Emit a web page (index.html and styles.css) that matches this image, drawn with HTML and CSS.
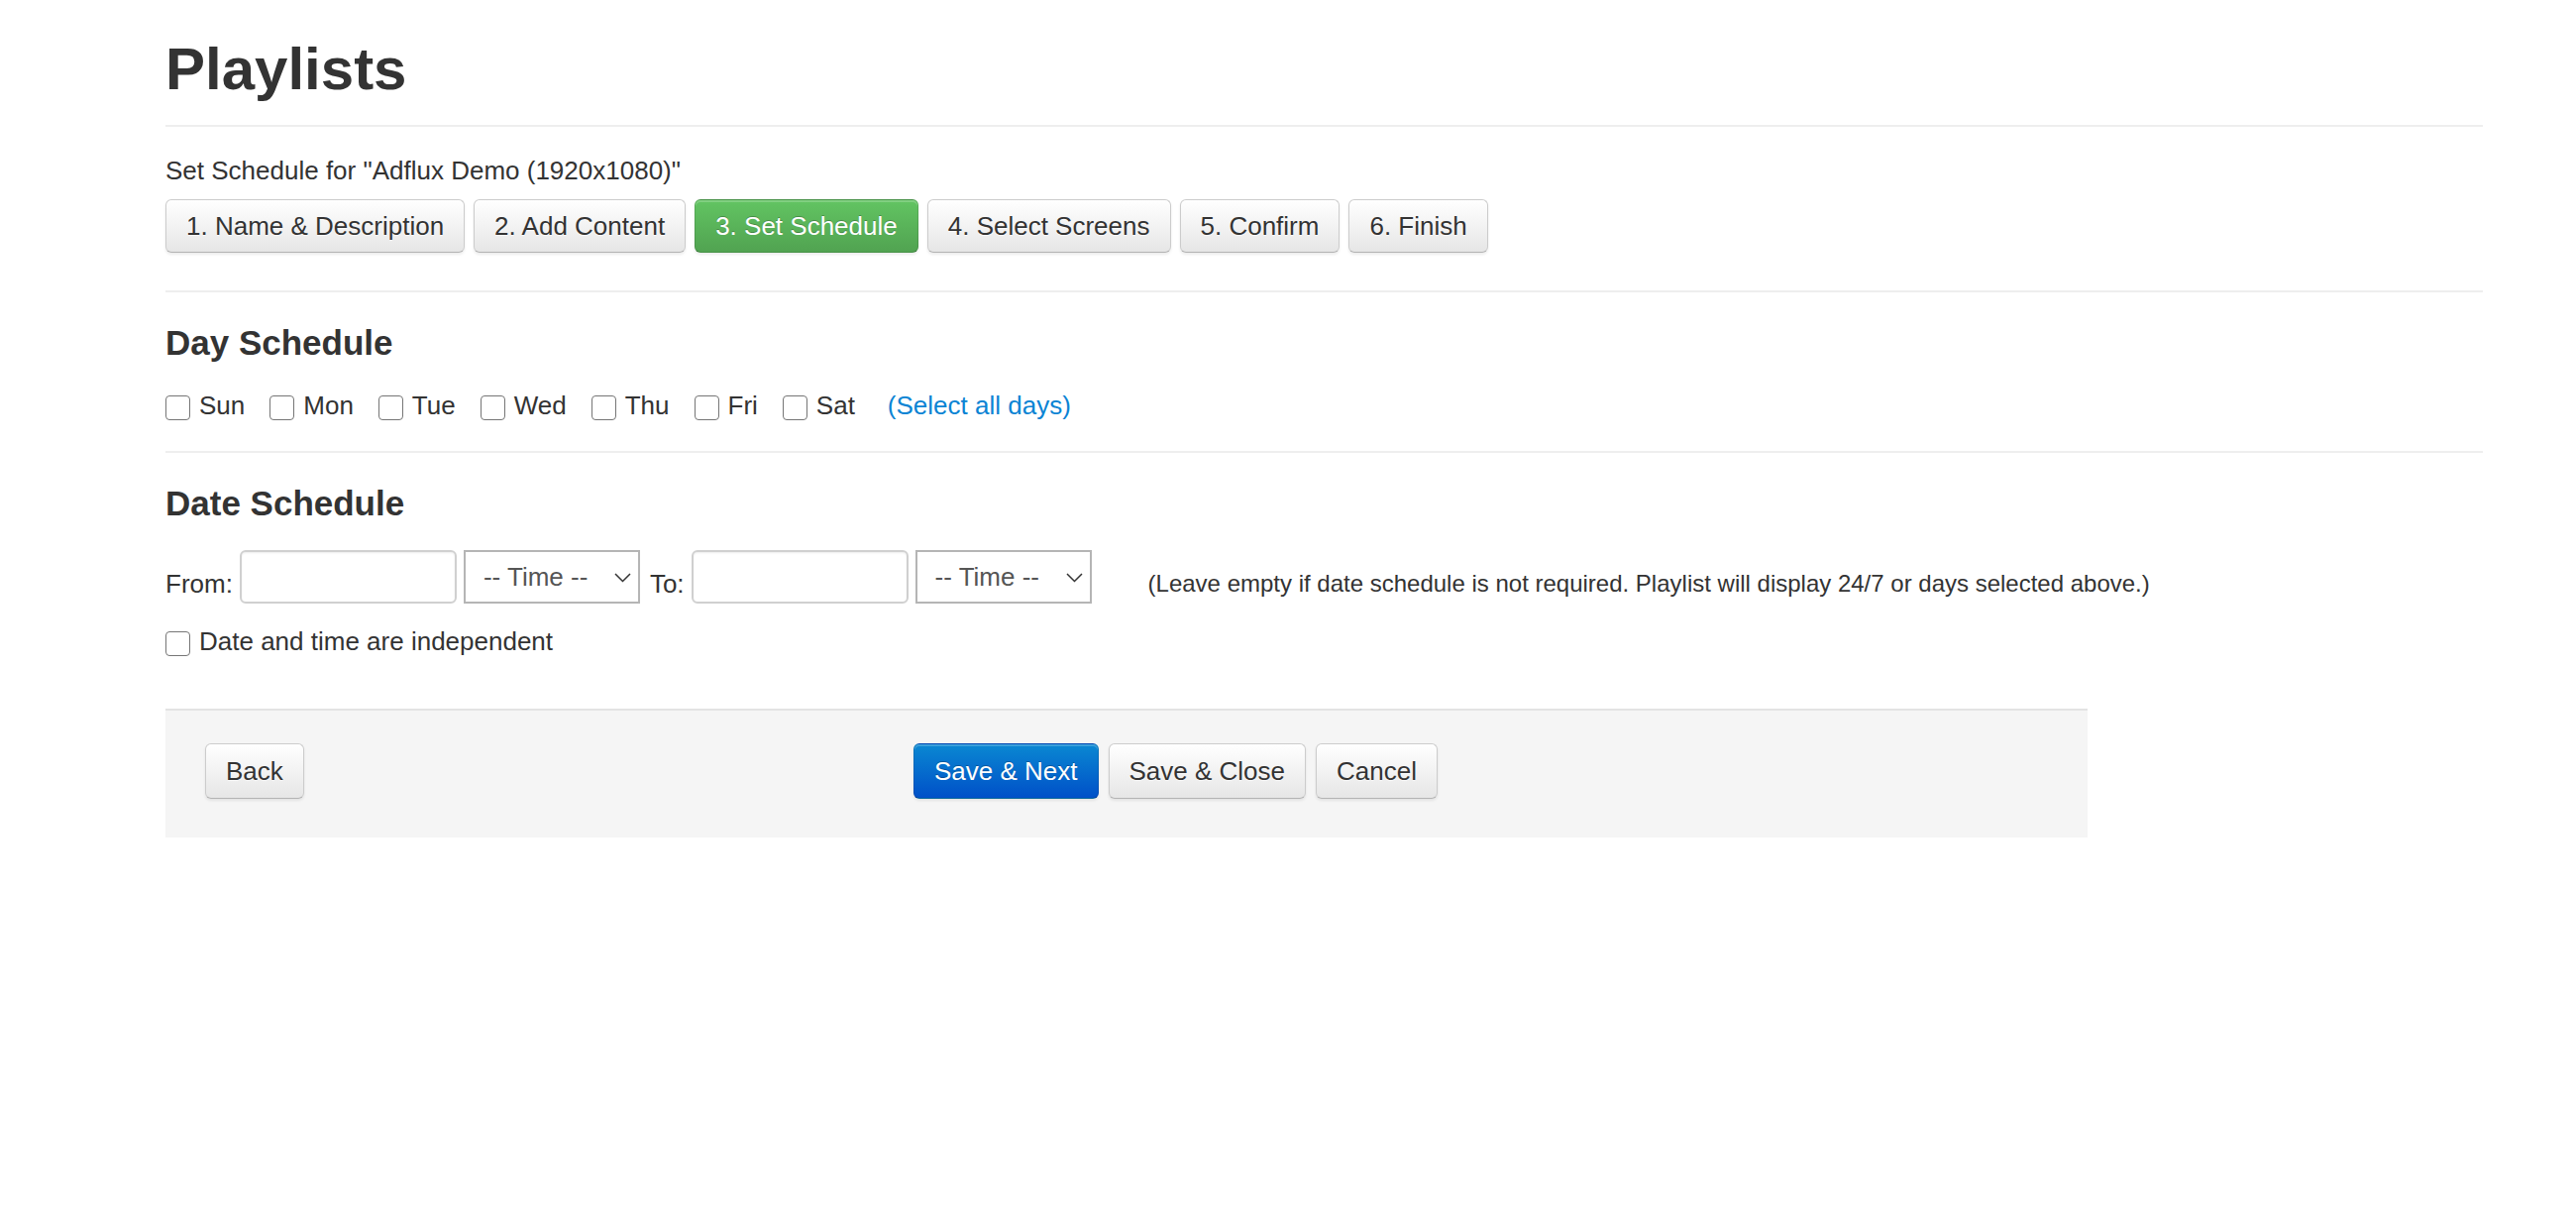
FILE: index.html
```html
<!DOCTYPE html>
<html lang="en">
<head>
<meta charset="utf-8">
<title>Playlists - Set Schedule</title>
<link rel="stylesheet" href="styles.css">
</head>
<body>
<div class="bg-grid"></div>
<main class="page">
  <h1 class="page-title">Playlists</h1>
  <hr class="rule rule-title">
  <p class="subtitle">Set Schedule for "Adflux Demo (1920x1080)"</p>
  <nav class="wizard">
    <button class="btn" type="button">1. Name &amp; Description</button>
    <button class="btn" type="button">2. Add Content</button>
    <button class="btn btn-success" type="button">3. Set Schedule</button>
    <button class="btn" type="button">4. Select Screens</button>
    <button class="btn" type="button">5. Confirm</button>
    <button class="btn" type="button">6. Finish</button>
  </nav>
  <hr class="rule rule-wizard">

  <h2 class="section-title">Day Schedule</h2>
  <div class="days">
    <label class="day"><input class="check" type="checkbox"><span>Sun</span></label>
    <label class="day"><input class="check" type="checkbox"><span>Mon</span></label>
    <label class="day"><input class="check" type="checkbox"><span>Tue</span></label>
    <label class="day"><input class="check" type="checkbox"><span>Wed</span></label>
    <label class="day"><input class="check" type="checkbox"><span>Thu</span></label>
    <label class="day"><input class="check" type="checkbox"><span>Fri</span></label>
    <label class="day"><input class="check" type="checkbox"><span>Sat</span></label>
    <a class="select-all" href="#">(Select all days)</a>
  </div>
  <hr class="rule rule-days">

  <h2 class="section-title">Date Schedule</h2>
  <div class="date-row">
    <span class="field-label">From:</span>
    <input class="date-input" type="text">
    <div class="select-wrap">
      <select class="time-select"><option>-- Time --</option></select>
      <svg class="chevron" width="17" height="10" viewBox="0 0 17 10" aria-hidden="true"><polyline points="1,1 8.5,8.5 16,1" fill="none" stroke="#333" stroke-width="1.5"/></svg>
    </div>
    <span class="field-label field-label-to">To:</span>
    <input class="date-input" type="text">
    <div class="select-wrap">
      <select class="time-select"><option>-- Time --</option></select>
      <svg class="chevron" width="17" height="10" viewBox="0 0 17 10" aria-hidden="true"><polyline points="1,1 8.5,8.5 16,1" fill="none" stroke="#333" stroke-width="1.5"/></svg>
    </div>
    <span class="help">(Leave empty if date schedule is not required. Playlist will display 24/7 or days selected above.)</span>
  </div>
  <label class="indep"><input class="check" type="checkbox"><span>Date and time are independent</span></label>

  <div class="form-actions">
    <div class="actions-left">
      <button class="btn btn-lg" type="button">Back</button>
    </div>
    <div class="actions-main">
      <button class="btn btn-lg btn-primary" type="button">Save &amp; Next</button>
      <button class="btn btn-lg" type="button">Save &amp; Close</button>
      <button class="btn btn-lg" type="button">Cancel</button>
    </div>
  </div>
</main>
</body>
</html>
```
FILE: styles.css
```css
* { box-sizing: border-box; }

html, body {
  margin: 0;
  padding: 0;
  background: #fff;
}

body {
  font-family: "Liberation Sans", Arial, sans-serif;
  font-size: 26px;
  line-height: 36px;
  color: #333;
}

.bg-grid {
  position: absolute;
  top: 0;
  left: 0;
  width: 100%;
  height: 116px;
  z-index: -1;
  background-image:
    linear-gradient(to right, rgba(0, 0, 0, 0.04) 1px, transparent 1px),
    linear-gradient(to bottom, rgba(0, 0, 0, 0.04) 1px, transparent 1px);
  background-size: 36px 36px;
  background-position: 15px 8px;
}

.page {
  width: 2506px;
  padding-left: 167px;
}

.page-title {
  margin: 37px 0 0;
  font-size: 60px;
  line-height: 66px;
  font-weight: 700;
  color: #333;
}

.rule {
  display: block;
  height: 2px;
  margin: 0;
  border: 0;
  background: #eee;
}

.rule-title { margin-top: 23px; }
.rule-wizard { margin-top: 38px; }
.rule-days { margin-top: 28px; }

.subtitle {
  margin: 26px 0 0;
}

.wizard {
  display: flex;
  gap: 9px;
  margin-top: 11px;
}

.btn {
  font-family: inherit;
  font-size: 26px;
  line-height: 32px;
  padding: 10px 20px;
  margin: 0;
  color: #333;
  border: 1px solid #ccc;
  border-bottom-color: #b3b3b3;
  border-radius: 6px;
  background: linear-gradient(#ffffff, #e6e6e6);
  text-shadow: 0 1px 1px rgba(255, 255, 255, 0.75);
  box-shadow: inset 0 2px 0 rgba(255, 255, 255, 0.2), 0 2px 3px rgba(0, 0, 0, 0.08);
  cursor: pointer;
  white-space: nowrap;
}

.btn-success {
  color: #fff;
  background: linear-gradient(#62c462, #51a351);
  border-color: rgba(0, 0, 0, 0.1) rgba(0, 0, 0, 0.1) rgba(0, 0, 0, 0.25);
  text-shadow: 0 -1px 0 rgba(0, 0, 0, 0.25);
}

.btn-primary {
  color: #fff;
  background: linear-gradient(#0a88d2, #0050c8);
  border-color: rgba(0, 0, 0, 0.1) rgba(0, 0, 0, 0.1) rgba(0, 0, 0, 0.25);
  text-shadow: 0 -1px 0 rgba(0, 0, 0, 0.25);
}

.btn-lg {
  line-height: 34px;
  padding: 10px 20px;
}

.section-title {
  margin: 32px 0 0;
  font-size: 35px;
  line-height: 38px;
  font-weight: 700;
  color: #333;
}

.days {
  display: flex;
  align-items: center;
  height: 36px;
  margin-top: 26px;
}

.day {
  display: flex;
  align-items: center;
  gap: 9px;
  margin-right: 25px;
}

.check {
  appearance: none;
  -webkit-appearance: none;
  width: 25px;
  height: 25px;
  margin: 4px 0 0;
  border: 1.5px solid #767676;
  border-radius: 4px;
  background: #fff;
  flex: none;
}

.select-all {
  margin-left: 8px;
  color: #0b84d4;
  text-decoration: none;
}

.date-row {
  display: flex;
  align-items: center;
  margin-top: 28px;
}

.field-label {
  padding-top: 14px;
}

.field-label-to {
  margin-left: 10px;
}

.date-input {
  width: 219px;
  height: 54px;
  margin: 0 0 0 7px;
  border: 2px solid #d0d0d0;
  border-radius: 6px;
  background: #fff;
  box-shadow: inset 0 1px 2px rgba(0, 0, 0, 0.075);
  font: inherit;
}

.select-wrap {
  position: relative;
  margin-left: 7px;
}

.time-select {
  appearance: none;
  -webkit-appearance: none;
  display: block;
  width: 178px;
  height: 54px;
  margin: 0;
  padding: 0 0 0 18px;
  border: 2px solid #b5b5b5;
  border-radius: 0;
  background: #fff;
  font-family: inherit;
  font-size: 26px;
  color: #555;
}

.chevron {
  position: absolute;
  right: 9px;
  top: 23px;
  pointer-events: none;
}

.help {
  margin-left: 57px;
  padding-top: 14px;
  font-size: 24px;
  line-height: 32px;
  color: #333;
}

.indep {
  display: flex;
  align-items: center;
  gap: 9px;
  height: 36px;
  margin-top: 20px;
}

.form-actions {
  display: grid;
  grid-template-columns: 715px auto;
  width: 1940px;
  margin-top: 50px;
  padding: 33px 40px 39px;
  border-top: 2px solid #e3e3e3;
  background: #f5f5f5;
}

.actions-main {
  display: flex;
  gap: 10px;
}
```
